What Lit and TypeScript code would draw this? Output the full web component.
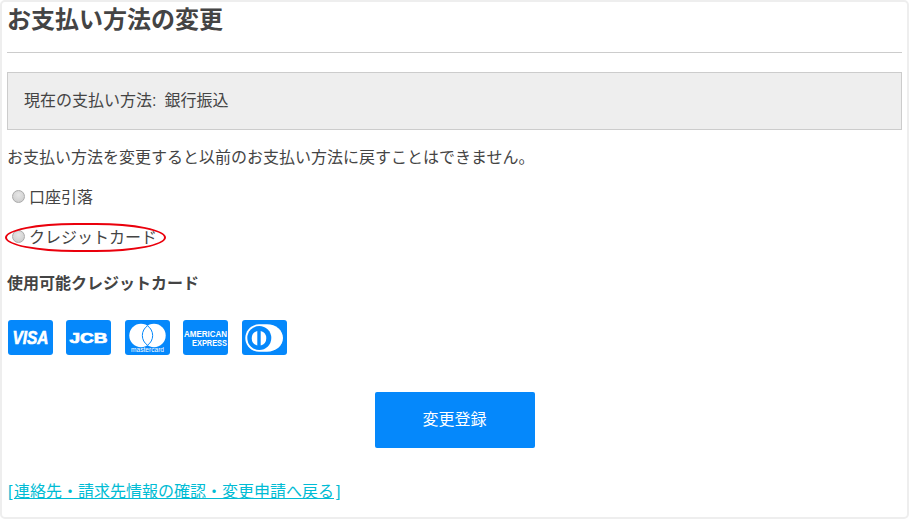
import { LitElement, html, css, svg } from "lit";
import { customElement } from "lit/decorators.js";

const visa = svg`<text x="4.500" y="24" font-family="Liberation Sans" font-weight="700" font-style="italic" font-size="17.500" textLength="36" lengthAdjust="spacingAndGlyphs" fill="#fff" stroke="#fff" stroke-width=".6">VISA</text>`;
const jcb = svg`<text x="3.500" y="23" font-family="Liberation Sans" font-weight="700" font-size="14.500" textLength="38" lengthAdjust="spacingAndGlyphs" fill="#fff" stroke="#fff" stroke-width=".7">JCB</text>`;
const master = svg`<circle cx="16" cy="15.500" r="11.700" fill="#fff"/><circle cx="29" cy="15.500" r="11.700" fill="#fff"/><path d="M22.500 5.800a11.700 11.700 0 0 1 0 19.400a11.700 11.700 0 0 1 0-19.400z" fill="#fff" stroke="#0588fb" stroke-width="1"/><text x="6" y="32" font-family="Liberation Sans" font-size="7" textLength="33" lengthAdjust="spacingAndGlyphs" fill="#fff">mastercard</text>`;
const amex = svg`<g transform="translate(1 16.500) scale(1 1.300)"><text font-family="Liberation Sans" font-weight="700" font-size="7.200" textLength="43" lengthAdjust="spacingAndGlyphs" fill="#fff">AMERICAN</text></g><g transform="translate(9 26) scale(1 1.150)"><text font-family="Liberation Sans" font-weight="700" font-size="7.200" textLength="35" lengthAdjust="spacingAndGlyphs" fill="#fff">EXPRESS</text></g>`;
const diners = svg`<path d="M17 4.300h8c9 0 16 6.200 16 13.700s-7 13.700-16 13.700h-8c-7.600 0-13.700-6.100-13.700-13.700s6.100-13.700 13.700-13.700z" fill="#fff"/><circle cx="17.300" cy="18" r="12" fill="#0588fb"/><path d="M15.300 11v14.500a7.500 7.500 0 0 1 0-14.500zM18.700 11v14.500a7.500 7.500 0 0 0 0-14.500z" fill="#fff"/>`;

@customElement("app-root")
export class AppRoot extends LitElement {
  static styles = css`
    :host {
      display: block;
      width: 909px;
      height: 519px;
      box-sizing: border-box;
      font-family: "Liberation Sans", "Noto Sans CJK JP", sans-serif;
    }
    .card {
      position: relative;
      box-sizing: border-box;
      height: 519px;
      padding: 0 5px;
      background: #fff;
      border: 2px solid #eee;
      border-radius: 5px;
      color: #444;
      font-size: 16px;
      line-height: 24px;
    }
    h1 {
      margin: 0;
      padding: 2px 0 0;
      font-size: 24px;
      line-height: 32px;
      height: 34px;
      font-weight: 700;
      color: #444;
    }
    hr {
      margin: 14px 0 19px;
      height: 1px;
      border: 0;
      background: #ccc;
    }
    .current {
      box-sizing: border-box;
      height: 58px;
      padding: 0 16px;
      display: flex;
      align-items: center;
      background: #eee;
      border: 1px solid #ccc;
      word-spacing: 3.500px;
    }
    .note { margin: 16px 0 0; }
    .radio {
      display: flex;
      align-items: center;
      height: 24px;
      padding-left: 5px;
      margin-top: 16px;
    }
    .radio i {
      box-sizing: border-box;
      width: 13px;
      height: 13px;
      margin: 0 4px 3px 0;
      border-radius: 50%;
      border: 1px solid #aaa;
      background: radial-gradient(circle at 50% 35%, #e6e6e6, #c9c9c9);
    }
    h2 {
      margin: 22px 0 0;
      font-size: 16px;
      line-height: 24px;
      font-weight: 700;
      color: #444;
    }
    .cards {
      display: flex;
      gap: 13.500px;
      margin: 24px 0 0 0.500px;
    }
    .cards svg { display: block; width: 45px; height: 35px; }
    .action { display: flex; justify-content: center; margin-top: 37px; }
    button {
      width: 160px;
      height: 56px;
      border: 0;
      border-radius: 2px;
      background: #0588fb;
      color: #fff;
      font: inherit;
    }
    .back { margin-top: 32px; padding-left: 1px; color: #00bcd4; }
    .back a { color: #00bcd4; text-decoration: underline; margin: 0 2px 0 1.500px; }
    .oval {
      position: absolute;
      left: 3px;
      top: 221px;
      width: 161px;
      height: 29px;
      box-sizing: border-box;
      border: 2px solid #ea000c;
      border-radius: 70px / 14.500px;
      pointer-events: none;
    }
  `;

  private brand(mark: unknown) {
    return html`<svg viewBox="0 0 45 35">
      <rect width="45" height="35" rx="3" fill="#0588fb"/>${mark}
    </svg>`;
  }

  render() {
    return html`<div class="card">
      <h1>お支払い方法の変更</h1>
      <hr />
      <div class="current">現在の支払い方法: 銀行振込</div>
      <p class="note">お支払い方法を変更すると以前のお支払い方法に戻すことはできません。</p>
      <div class="radio"><i></i>口座引落</div>
      <div class="radio"><i></i>クレジットカード</div>
      <h2>使用可能クレジットカード</h2>
      <div class="cards">
        ${[visa, jcb, master, amex, diners].map((m) => this.brand(m))}
      </div>
      <div class="action"><button>変更登録</button></div>
      <div class="back">[<a href="#">連絡先・請求先情報の確認・変更申請へ戻る</a>]</div>
      <div class="oval"></div>
    </div>`;
  }
}
